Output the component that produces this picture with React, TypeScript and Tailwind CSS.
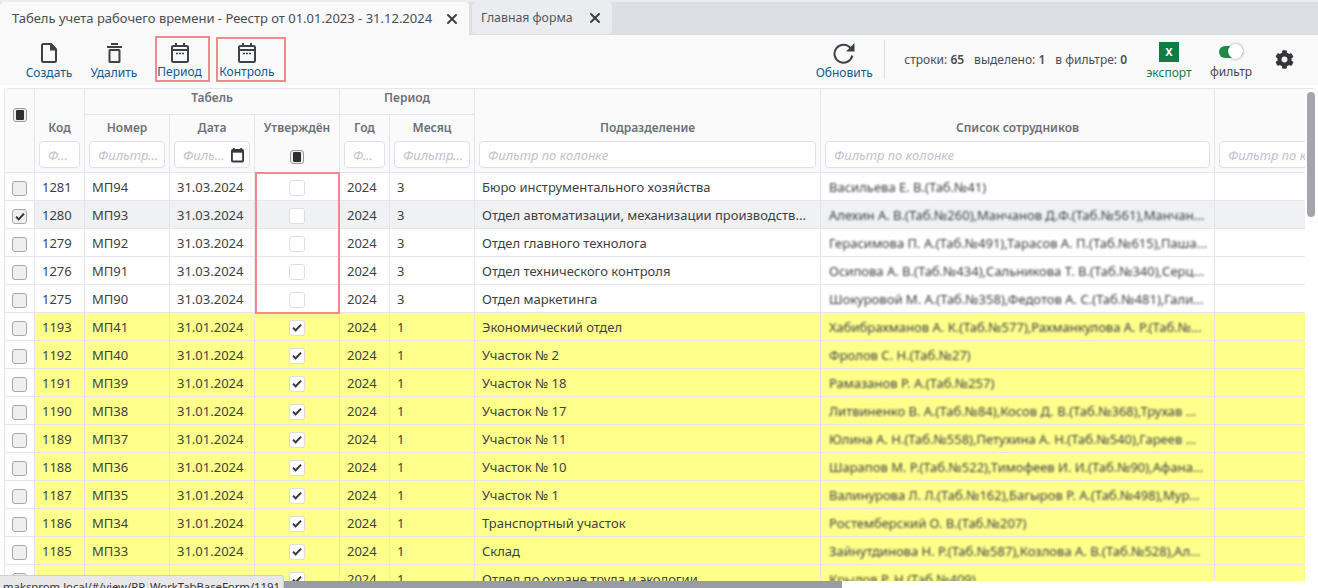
import { X } from "lucide-react";
import { FaCog } from "react-icons/fa";

const font = "font-['Noto_Sans','Open_Sans',sans-serif]";

interface Row {
  id: number;
  num: string;
  date: string;
  ok: boolean;
  month: number;
  dept: string;
  staff: string;
  selected?: boolean;
}

const rows: Row[] = [
  { id: 1281, num: "МП94", date: "31.03.2024", ok: false, month: 3, dept: "Бюро инструментального хозяйства", staff: "Васильева Е. В.(Таб.№41)" },
  { id: 1280, num: "МП93", date: "31.03.2024", ok: false, month: 3, dept: "Отдел автоматизации, механизации производств...", staff: "Алехин А. В.(Таб.№260),Манчанов Д.Ф.(Таб.№561),Манчан...", selected: true },
  { id: 1279, num: "МП92", date: "31.03.2024", ok: false, month: 3, dept: "Отдел главного технолога", staff: "Герасимова П. А.(Таб.№491),Тарасов А. П.(Таб.№615),Паша..." },
  { id: 1276, num: "МП91", date: "31.03.2024", ok: false, month: 3, dept: "Отдел технического контроля", staff: "Осипова А. В.(Таб.№434),Сальникова Т. В.(Таб.№340),Серц..." },
  { id: 1275, num: "МП90", date: "31.03.2024", ok: false, month: 3, dept: "Отдел маркетинга", staff: "Шокуровой М. А.(Таб.№358),Федотов А. С.(Таб.№481),Гали..." },
  { id: 1193, num: "МП41", date: "31.01.2024", ok: true, month: 1, dept: "Экономический отдел", staff: "Хабибрахманов А. К.(Таб.№577),Рахманкулова А. Р.(Таб.№..." },
  { id: 1192, num: "МП40", date: "31.01.2024", ok: true, month: 1, dept: "Участок № 2", staff: "Фролов С. Н.(Таб.№27)" },
  { id: 1191, num: "МП39", date: "31.01.2024", ok: true, month: 1, dept: "Участок № 18", staff: "Рамазанов Р. А.(Таб.№257)" },
  { id: 1190, num: "МП38", date: "31.01.2024", ok: true, month: 1, dept: "Участок № 17", staff: "Литвиненко В. А.(Таб.№84),Косов Д. В.(Таб.№368),Трухав ..." },
  { id: 1189, num: "МП37", date: "31.01.2024", ok: true, month: 1, dept: "Участок № 11", staff: "Юлина А. Н.(Таб.№558),Петухина А. Н.(Таб.№540),Гареев ..." },
  { id: 1188, num: "МП36", date: "31.01.2024", ok: true, month: 1, dept: "Участок № 10", staff: "Шарапов М. Р.(Таб.№522),Тимофеев И. И.(Таб.№90),Афана..." },
  { id: 1187, num: "МП35", date: "31.01.2024", ok: true, month: 1, dept: "Участок № 1", staff: "Валинурова Л. Л.(Таб.№162),Багыров Р. А.(Таб.№498),Мур..." },
  { id: 1186, num: "МП34", date: "31.01.2024", ok: true, month: 1, dept: "Транспортный участок", staff: "Ростемберский О. В.(Таб.№207)" },
  { id: 1185, num: "МП33", date: "31.01.2024", ok: true, month: 1, dept: "Склад", staff: "Зайнутдинова Н. Р.(Таб.№587),Козлова А. В.(Таб.№528),Ал..." },
  { id: 1184, num: "МП32", date: "31.01.2024", ok: true, month: 1, dept: "Отдел по охране труда и экологии", staff: "Крылов Р. Н.(Таб.№409)" },
];

function CalendarIcon({ className }: { className?: string }) {
  return (
    <svg viewBox="0 0 18 20" className={className} fill="none" stroke="#3f4148">
      <rect x="1" y="3" width="16" height="16" rx="1.5" strokeWidth="2" />
      <path d="M1 7h16" strokeWidth="2" />
      <path d="M5 0v4M13 0v4" strokeWidth="2" />
      <path d="M5 10.5h2M8 10.5h2M11 10.5h2" strokeWidth="1.6" />
    </svg>
  );
}

function ToolButton({ label, icon, className }: { label: string; icon: React.ReactNode; className?: string }) {
  return (
    <div className={"flex flex-col items-center " + (className ?? "")}>
      <div className="h-[24px] flex items-center justify-center">{icon}</div>
      <span className="text-[12px] leading-[16px] text-[#0b5a94] whitespace-nowrap">{label}</span>
    </div>
  );
}

function Box({ state }: { state: "empty" | "checked" | "mixed" | "faint" | "white" }) {
  if (state === "mixed") {
    return (
      <span className="inline-flex w-[14px] h-[14px] rounded-[3px] border border-[#9a9a9a] bg-[#eee] items-center justify-center align-middle">
        <span className="block w-[8px] h-[10px] bg-[#2f2f33] rounded-[1px]" />
      </span>
    );
  }
  if (state === "faint") {
    return <span className="inline-block w-[16px] h-[16px] rounded-[3px] border border-[#dedfe3] bg-white align-middle" />;
  }
  return (
    <span
      className={
        "inline-flex rounded-[3px] border items-center justify-center align-middle " +
        (state === "white" ? "border-[#dcdcdc] bg-white w-[16px] h-[16px]" : "border-[#a8a8a8] bg-[#efefef] w-[15px] h-[15px]")
      }
    >
      {state !== "empty" && (
        <svg viewBox="0 0 12 10" className="w-[10px] h-[9px]">
          <path d="M1.2 5.2 4.4 8.4 10.8 1.6" fill="none" stroke="#333" strokeWidth="2.4" />
        </svg>
      )}
    </span>
  );
}

function Filter({ text, icon }: { text: string; icon?: boolean }) {
  return (
    <div className="h-[27px] bg-white border border-[#dfe1e8] rounded-[4px] flex items-center pl-[8px] pr-[5px] overflow-hidden text-left">
      <span className="italic font-normal text-[13px] text-[#bfc2cd] whitespace-nowrap overflow-hidden flex-1">{text}</span>
      {icon && (
        <svg viewBox="0 0 14 16" className="w-[13px] h-[16px] shrink-0">
          <path d="M3 .5v3M11 .5v3" stroke="#343a40" strokeWidth="2" />
          <rect x="1" y="2.5" width="12" height="12.5" rx="1" fill="none" stroke="#343a40" strokeWidth="2" />
          <rect x="1" y="2.5" width="12" height="3" fill="#343a40" />
        </svg>
      )}
    </div>
  );
}

const cellBase = "border-r border-[#e4e5ee] bg-[#fafafa] font-semibold text-[12px] leading-[16px] text-[#6c7078] text-center p-0";
const th = cellBase + " border-b";
const filterTh = th + " align-top pt-[1px] px-[4px]";
const td = "border-r border-b border-[#e4e5ee] px-[7px] p-0 whitespace-nowrap overflow-hidden text-[13px] leading-[18px] text-[#3c3f44]";

export default function App() {
  return (
    <div className={"relative w-[1318px] h-[588px] overflow-hidden bg-white " + font}>
      {/* tabs */}
      <div className="h-[35px] bg-[#dcdfe4] border-t-[2px] border-[#ececee] flex items-end">
        <div className="h-[33px] w-[469px] bg-[#f9f9f9] rounded-t-[4px] flex items-center justify-between pl-[12px] pr-[9px] text-[13px] text-[#4a4d52]">
          <span className="whitespace-nowrap">Табель учета рабочего времени - Реестр от 01.01.2023 - 31.12.2024</span>
          <X size={16} strokeWidth={3} className="text-[#3c4046]" />
        </div>
        <div className="h-[32px] w-[140px] ml-[3px] mb-[1px] bg-[#eaecf0] rounded-[4px] flex items-center justify-between pl-[9px] pr-[9px] text-[12.3px] text-[#55585e]">
          <span className="whitespace-nowrap">Главная форма</span>
          <X size={16} strokeWidth={3} className="text-[#3c4046]" />
        </div>
      </div>

      {/* toolbar */}
      <div className="h-[50px] bg-[#f9f9f9] flex items-start pt-[6px] text-[#343a40]">
        <ToolButton
          className="ml-[26px] w-[46px]"
          label="Создать"
          icon={
            <svg viewBox="0 0 16 20" className="w-[16px] h-[20px]" fill="none" stroke="#3f4148" strokeWidth="2">
              <path d="M1 2.5A1.5 1.5 0 0 1 2.5 1H10l5 5.5v11a1.5 1.5 0 0 1-1.5 1.5h-11A1.5 1.5 0 0 1 1 17.500z" />
              <path d="M10 1v5.500h5z" fill="#3f4148" />
            </svg>
          }
        />
        <ToolButton
          className="ml-[18px] w-[48px]"
          label="Удалить"
          icon={
            <svg viewBox="0 0 15 20" className="w-[15px] h-[20px]" fill="none" stroke="#3f4148" strokeWidth="2">
              <path d="M0 4h15" />
              <path d="M4 1h7" />
              <rect x="2.500" y="7" width="10" height="12" rx="0.5" />
            </svg>
          }
        />
        <ToolButton
          className="ml-[17px] w-[55px] h-[46px] border-2 border-[#f08a8f] -mt-[5px] pt-[3px] pr-[6px]"
          label="Период"
          icon={<CalendarIcon className="w-[18px] h-[20px]" />}
        />
        <ToolButton
          className="ml-[6px] w-[70px] h-[45px] border-2 border-[#f08a8f] -mt-[4px] pt-[2px] pr-[8px]"
          label="Контроль"
          icon={<CalendarIcon className="w-[18px] h-[20px]" />}
        />
        <div className="flex-1" />
        <ToolButton
          className="w-[58px] -ml-[1px]"
          label="Обновить"
          icon={
            <svg viewBox="0 0 24 22" className="w-[24px] h-[22px]" fill="none">
              <path d="M18.6 6.200A9 9 0 1 0 20.300 13.500" stroke="#3f4148" strokeWidth="2" />
              <path d="M22.500 1v8.500H14z" fill="#3f4148" />
            </svg>
          }
        />
        <div className="w-px h-[39px] bg-[#dcdde0] ml-[11px] -mt-[1px]" />
        <div className="ml-[19px] mt-[11px] text-[12px] leading-[16px] text-[#4a4d52] whitespace-nowrap">
          строки: <b className="font-semibold">65</b>
          <span className="ml-[10px]">выделено: <b className="font-semibold">1</b></span>
          <span className="ml-[10px]">в фильтре: <b className="font-semibold">0</b></span>
        </div>
        <div className="ml-[18px] w-[48px] flex flex-col items-center">
          <div className="w-[20px] h-[20px] mt-[1px] bg-[#107c41] flex items-center justify-center text-white text-[11px] font-bold">X</div>
          <span className="text-[12px] leading-[16px] mt-[3px] text-[#0f7d46]">экспорт</span>
        </div>
        <div className="ml-[17px] w-[42px] flex flex-col items-center">
          <div className="relative w-[24px] h-[12px] mt-[5px] mb-[3px] rounded-full bg-[#1f8a4c]">
            <span className="absolute right-0 -top-[2px] w-[15px] h-[15px] rounded-full bg-white shadow-[0_0_3px_rgba(0,0,0,0.4)]" />
          </div>
          <span className="text-[12px] leading-[16px] mt-[3px] text-[#4c4458]">фильтр</span>
        </div>
        <FaCog size={19} className="ml-[23px] mt-[9px] mr-[24px] text-[#33373c]" />
      </div>

      <div className="h-[3px]" />

      {/* table */}
      <div className="ml-[4px] w-[1312px] h-[493px] border-t border-l border-[#e4e5ee] rounded-t-[4px] overflow-hidden">
        <div className="relative w-[1300px] h-[492px] overflow-hidden">
          <table className="table-fixed border-separate border-spacing-0 w-[1340px]">
            <colgroup>
              <col className="w-[30px]" />
              <col className="w-[50px]" />
              <col className="w-[85px]" />
              <col className="w-[85px]" />
              <col className="w-[85px]" />
              <col className="w-[50px]" />
              <col className="w-[85px]" />
              <col className="w-[346px]" />
              <col className="w-[394px]" />
              <col className="w-[130px]" />
            </colgroup>
            <thead>
              <tr className="h-[26px]">
                <th rowSpan={3} className={th + " align-top pt-[17px]"}>
                  <Box state="mixed" />
                </th>
                <th rowSpan={2} className={cellBase + " align-bottom pb-[4px]"}>Код</th>
                <th colSpan={3} className={th + " align-top pt-[1px]"}>Табель</th>
                <th colSpan={2} className={th + " align-top pt-[1px]"}>Период</th>
                <th rowSpan={2} className={cellBase + " align-bottom pb-[4px]"}>Подразделение</th>
                <th rowSpan={2} className={cellBase + " align-bottom pb-[4px]"}>Список сотрудников</th>
                <th rowSpan={2} className={cellBase} />
              </tr>
              <tr className="h-[25px]">
                <th className={cellBase}>Номер</th>
                <th className={cellBase}>Дата</th>
                <th className={cellBase}>Утверждён</th>
                <th className={cellBase}>Год</th>
                <th className={cellBase}>Месяц</th>
              </tr>
              <tr className="h-[33px]">
                <th className={filterTh}><Filter text="Ф..." /></th>
                <th className={filterTh}><Filter text="Фильтр..." /></th>
                <th className={filterTh}><Filter text="Филь..." icon /></th>
                <th className={th}><Box state="mixed" /></th>
                <th className={filterTh}><Filter text="Ф..." /></th>
                <th className={filterTh}><Filter text="Фильтр..." /></th>
                <th className={filterTh}><Filter text="Фильтр по колонке" /></th>
                <th className={filterTh}><Filter text="Фильтр по колонке" /></th>
                <th className={filterTh}><Filter text="Фильтр по колонке" /></th>
              </tr>
            </thead>
            <tbody>
              {rows.map((r) => {
                const bg = r.ok ? "bg-[#ffff8c]" : r.selected ? "bg-[#f0f1f3]" : "bg-white";
                return (
                  <tr key={r.id} className="h-[28px]">
                    <td className={td + " bg-white text-center"}>
                      <Box state={r.selected ? "checked" : "empty"} />
                    </td>
                    <td className={td + " " + bg}>{r.id}</td>
                    <td className={td + " " + bg}>{r.num}</td>
                    <td className={td + " " + bg}>{r.date}</td>
                    <td className={td + " text-center " + bg}>
                      {r.ok ? <Box state="white" /> : <Box state="faint" />}
                    </td>
                    <td className={td + " " + bg}>2024</td>
                    <td className={td + " " + bg}>{r.month}</td>
                    <td className={td + " " + bg}>{r.dept}</td>
                    <td className={td + " " + bg}>
                      <span className="block pl-[1px] blur-[1.2px]">{r.staff}</span>
                    </td>
                    <td className={td + " " + bg} />
                  </tr>
                );
              })}
            </tbody>
          </table>
          <div className="absolute left-[250px] top-[83px] w-[85px] h-[142px] border-2 border-[#f08a8f] pointer-events-none" />
        </div>
      </div>

      {/* vertical scrollbar */}
      <div className="absolute left-[1307px] top-[92px] w-[8px] h-[125px] rounded-full bg-[#a3a5ad]" />

      {/* horizontal scrollbar */}
      <div className="absolute left-0 top-[581px] w-[842px] h-[7px] bg-[#9a9ca5]" />

      {/* status link */}
      <div className="absolute left-0 bottom-0 w-[284px] h-[13px] bg-[#e8e8e8] rounded-tr-[3px] border-t border-r border-[#cfcfcf] pt-[3px] text-[11.3px] leading-[15px] text-[#333] pl-[3px] whitespace-nowrap overflow-hidden">
        maksprom.local/#/view/RP_WorkTabBaseForm/1191
      </div>
    </div>
  );
}
